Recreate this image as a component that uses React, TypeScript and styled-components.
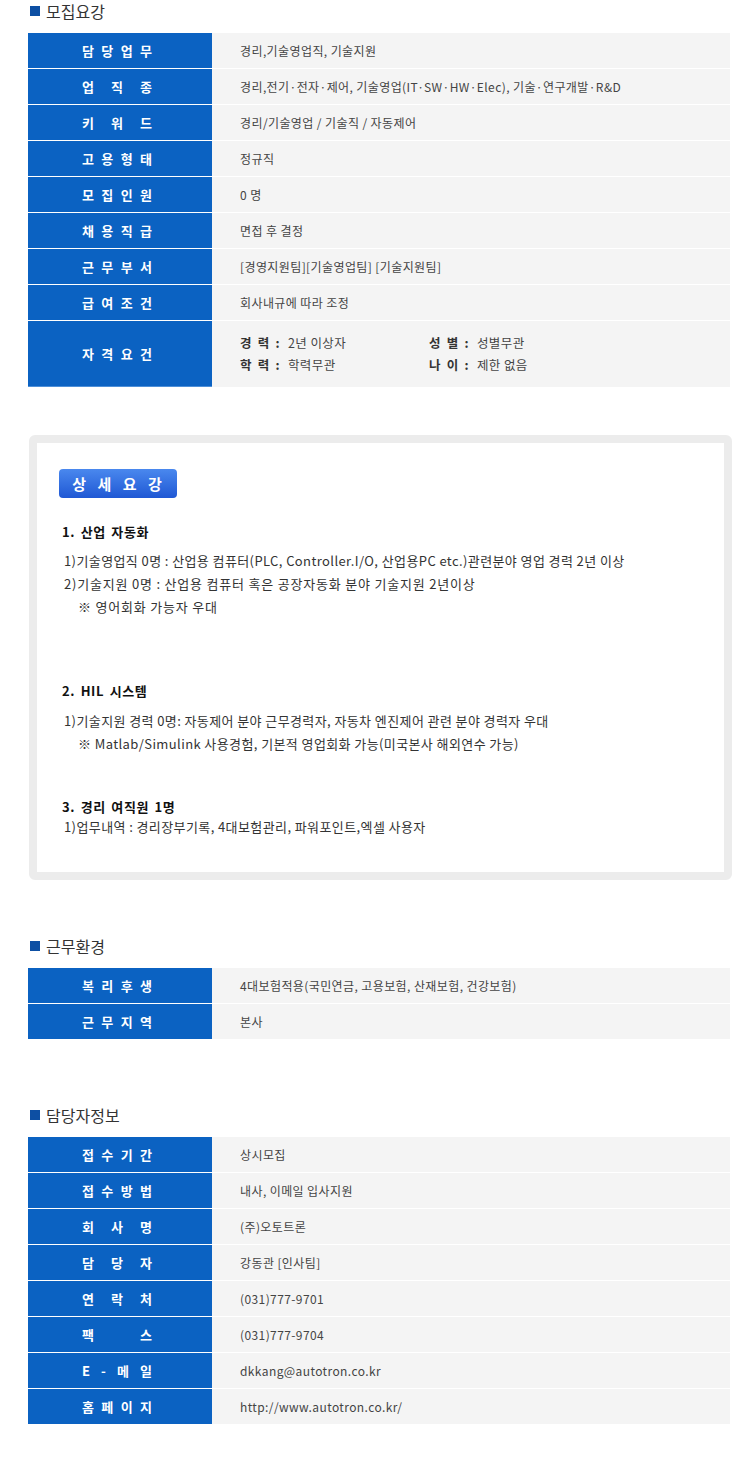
import React, { FC } from "react";
import styled, { createGlobalStyle } from "styled-components";

const GlobalStyle = createGlobalStyle`
  body {
    margin: 0;
    background: #fff;
    font-family: "Noto Sans CJK KR", "Noto Sans", sans-serif;
    color: #444;
  }
`;

interface Row {
  label: string;
  value: React.ReactNode;
}

const recruitRows: Row[] = [
  { label: "담 당 업 무", value: "경리,기술영업직, 기술지원" },
  { label: "업 직 종", value: "경리,전기·전자·제어, 기술영업(IT·SW·HW·Elec), 기술·연구개발·R&D" },
  { label: "키 워 드", value: "경리/기술영업 / 기술직 / 자동제어" },
  { label: "고 용 형 태", value: "정규직" },
  { label: "모 집 인 원", value: " 0 명" },
  { label: "채 용 직 급", value: "면접 후 결정" },
  { label: "근 무 부 서", value: "[경영지원팀][기술영업팀] [기술지원팀]" },
  { label: "급 여 조 건", value: "회사내규에 따라 조정" },
];

const envRows: Row[] = [
  { label: "복 리 후 생", value: "4대보험적용(국민연금, 고용보험, 산재보험, 건강보험)" },
  { label: "근 무 지 역", value: "본사" },
];

const contactRows: Row[] = [
  { label: "접 수 기 간", value: "상시모집" },
  { label: "접 수 방 법", value: "내사, 이메일 입사지원" },
  { label: "회 사 명", value: "(주)오토트론" },
  { label: "담 당 자", value: "강동관 [인사팀]" },
  { label: "연 락 처", value: "(031)777-9701" },
  { label: "팩 스", value: "(031)777-9704" },
  { label: "E - 메 일", value: "dkkang@autotron.co.kr" },
  { label: "홈 페 이 지", value: "http://www.autotron.co.kr/" },
];

const InfoTable: FC<{ rows: Row[]; children?: React.ReactNode }> = ({ rows, children }) => (
  <Table>
    {rows.map((row) => (
      <TableRow key={row.label}>
        <LabelCell>
          <LabelText>{row.label}</LabelText>
        </LabelCell>
        <ValueCell>{row.value}</ValueCell>
      </TableRow>
    ))}
    {children}
  </Table>
);

const App: FC = () => {
  return (
    <Page>
      <GlobalStyle />

      {/* 모집요강 */}
      <SectionTitle>모집요강</SectionTitle>
      <InfoTable rows={recruitRows}>
        <TableRow $tall>
          <LabelCell $last>
            <LabelText>자 격 요 건</LabelText>
          </LabelCell>
          <ValueCell>
            <QualGrid>
              <QualItem>
                <b>경 력 :</b> 2년 이상자
              </QualItem>
              <QualItem>
                <b>성 별 :</b> 성별무관
              </QualItem>
              <QualItem>
                <b>학 력 :</b> 학력무관
              </QualItem>
              <QualItem>
                <b>나 이 :</b> 제한 없음
              </QualItem>
            </QualGrid>
          </ValueCell>
        </TableRow>
      </InfoTable>

      {/* 상세요강 */}
      <DetailBox>
        <DetailButton>상 세 요 강</DetailButton>

        <DetailHeading $top={25}>1. 산업 자동화</DetailHeading>
        <DetailLine $top={8}>
          1)기술영업직 0명 : 산업용 컴퓨터(PLC, Controller.I/O, 산업용PC etc.)관련분야 영업 경력 2년 이상
        </DetailLine>
        <DetailLine $wide>2)기술지원 0명 : 산업용 컴퓨터 혹은 공장자동화 분야 기술지원 2년이상</DetailLine>
        <DetailLine $indent={14} $wide>※ 영어회화 가능자 우대</DetailLine>

        <DetailHeading $top={64}>2. HIL 시스템</DetailHeading>
        <DetailLine $top={9}>
          1)기술지원 경력 0명: 자동제어 분야 근무경력자, 자동차 엔진제어 관련 분야 경력자 우대
        </DetailLine>
        <DetailLine $indent={14}>
          ※ Matlab/Simulink 사용경험, 기본적 영업회화 가능(미국본사 해외연수 가능)
        </DetailLine>

        <DetailHeading $top={43}>3. 경리 여직원 1명</DetailHeading>
        <DetailLine $top={-1}>1)업무내역 : 경리장부기록, 4대보험관리, 파워포인트,엑셀 사용자</DetailLine>
      </DetailBox>

      {/* 근무환경 */}
      <SectionTitle $top={55}>근무환경</SectionTitle>
      <InfoTable rows={envRows} />

      {/* 담당자정보 */}
      <SectionTitle $top={64}>담당자정보</SectionTitle>
      <InfoTable rows={contactRows} />
    </Page>
  );
};

const Page = styled.div`
  width: 747px;
  min-height: 1477px;
  padding: 0 15px 0 28px;
  box-sizing: border-box;
`;

const SectionTitle = styled.h3<{ $top?: number }>`
  display: flex;
  align-items: center;
  gap: 6px;
  height: 22px;
  margin: ${(p) => p.$top ?? 0}px 0 11px 2px;
  font-size: 16px;
  font-weight: normal;
  color: #333;

  &::before {
    content: "";
    width: 10px;
    height: 10px;
    background: #0d4fa3;
  }
`;

const Table = styled.div`
  width: 702px;
  display: flex;
  flex-direction: column;
`;

const TableRow = styled.div<{ $tall?: boolean }>`
  display: grid;
  grid-template-columns: 184px 1fr;
  height: ${(p) => (p.$tall ? 66 : 36)}px;
  border-bottom: ${(p) => (p.$tall ? "none" : "1px solid #fff")};
  box-sizing: border-box;
`;

const LabelCell = styled.div<{ $last?: boolean }>`
  display: flex;
  align-items: center;
  justify-content: center;
  padding-right: 6px;
  background: #0b62c2;
  border-bottom: ${(p) => (p.$last ? "1px solid #4d8fd8" : "none")};
`;

const LabelText = styled.span`
  display: inline-block;
  width: 70px;
  color: #fff;
  font-size: 13px;
  font-weight: bold;
  text-align: justify;
  text-align-last: justify;
  white-space: nowrap;
`;

const ValueCell = styled.div`
  display: flex;
  align-items: center;
  padding-left: 28px;
  background: #f4f4f4;
  font-size: 12px;
  color: #444;
  letter-spacing: 0.4px;
`;

const QualGrid = styled.div`
  display: grid;
  grid-template-columns: 189px 1fr;
  row-gap: 6px;
  margin-top: -1px;
  font-size: 12.5px;
`;

const QualItem = styled.div`
  line-height: 16px;

  b {
    color: #333;
    margin-right: 4px;
    letter-spacing: 1.2px;
    word-spacing: 1px;
  }
`;

const DetailBox = styled.div`
  width: 703px;
  height: 445px;
  margin: 48px 0 0 1px;
  padding: 26px 0 0 22px;
  box-sizing: border-box;
  border: 8px solid #ececec;
  border-radius: 6px;
  background: #fff;
`;

const DetailButton = styled.div`
  width: 118px;
  height: 29px;
  display: flex;
  align-items: center;
  justify-content: center;
  border-radius: 4px;
  background: linear-gradient(#4a88ee, #1f58d4);
  color: #fff;
  font-size: 15px;
  font-weight: bold;
  letter-spacing: 4px;
  padding-left: 2px;
  box-sizing: border-box;
`;

const DetailHeading = styled.div<{ $top: number }>`
  margin: ${(p) => p.$top}px 0 0 3px;
  font-size: 13px;
  font-weight: bold;
  color: #111;
  line-height: 18px;
  letter-spacing: 0.6px;
  word-spacing: 2px;
`;

const DetailLine = styled.div<{ $top?: number; $indent?: number; $wide?: boolean }>`
  margin: ${(p) => p.$top ?? 0}px 0 0 ${(p) => 5 + (p.$indent ?? 0)}px;
  font-size: 13px;
  color: #333;
  line-height: 23px;
  letter-spacing: ${(p) => (p.$wide ? 0.8 : 0.4)}px;
  white-space: nowrap;
`;

export default App;
